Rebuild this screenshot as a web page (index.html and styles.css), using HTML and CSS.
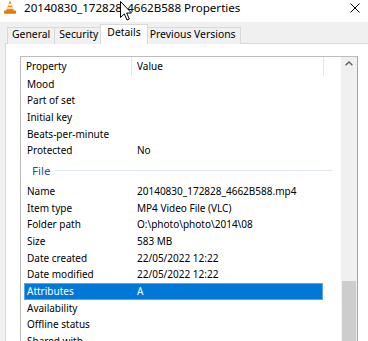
FILE: index.html
```html
<!DOCTYPE html>
<html lang="en">
<head>
    <meta charset="UTF-8">
    <meta name="viewport" content="width=device-width, initial-scale=1.0">
    <title>20140830_172828_4662B588 Properties</title>
    <link rel="stylesheet" href="styles.css">
</head>
<body>
    <div class="window">
        <!-- Title bar -->
        <header class="titlebar">
            <span class="app-icon">
                <svg width="14" height="15" viewBox="0 0 14 15">
                    <polygon points="7,0.3 2.9,11 11.1,11" fill="#f58a0b"/>
                    <polygon points="5.7,3.8 8.3,3.8 8.9,5.4 5.1,5.4" fill="#fff"/>
                    <polygon points="4.4,7.2 9.6,7.2 10.2,8.8 3.8,8.8" fill="#fff"/>
                    <rect x="1" y="10.6" width="12" height="3.2" rx="0.8" fill="#e8760a"/>
                </svg>
            </span>
            <span class="title">20140830_172828_4662B588 Properties</span>
            <span class="close">
                <svg width="10" height="10" viewBox="0 0 10 10">
                    <path d="M0.5 0.5 L9.5 9.5 M9.5 0.5 L0.5 9.5" stroke="#000" stroke-width="1"/>
                </svg>
            </span>
        </header>

        <div class="dialog">
            <!-- Tabs -->
            <nav class="tabs">
                <span class="tab">General</span>
                <span class="tab">Security</span>
                <span class="tab active">Details</span>
                <span class="tab">Previous Versions</span>
            </nav>

            <!-- Details panel -->
            <section class="panel">
                <div class="listview">
                    <div class="list">
                        <div class="list-header">
                            <span class="col-prop">Property</span>
                            <span class="col-value">Value</span>
                        </div>
                        <div class="row"><span class="cell-prop">Mood</span><span class="cell-value"></span></div>
                        <div class="row"><span class="cell-prop">Part of set</span><span class="cell-value"></span></div>
                        <div class="row"><span class="cell-prop">Initial key</span><span class="cell-value"></span></div>
                        <div class="row"><span class="cell-prop">Beats-per-minute</span><span class="cell-value"></span></div>
                        <div class="row"><span class="cell-prop">Protected</span><span class="cell-value">No</span></div>

                        <div class="group">
                            <span class="group-label">File</span>
                            <span class="group-line"></span>
                        </div>
                        <div class="row"><span class="cell-prop">Name</span><span class="cell-value">20140830_172828_4662B588.mp4</span></div>
                        <div class="row"><span class="cell-prop">Item type</span><span class="cell-value">MP4 Video File (VLC)</span></div>
                        <div class="row"><span class="cell-prop">Folder path</span><span class="cell-value">O:\photo\photo\2014\08</span></div>
                        <div class="row"><span class="cell-prop">Size</span><span class="cell-value">583 MB</span></div>
                        <div class="row"><span class="cell-prop">Date created</span><span class="cell-value">22/05/2022 12:22</span></div>
                        <div class="row"><span class="cell-prop">Date modified</span><span class="cell-value">22/05/2022 12:22</span></div>
                        <div class="row selected"><span class="cell-prop">Attributes</span><span class="cell-value">A</span></div>
                        <div class="row"><span class="cell-prop">Availability</span><span class="cell-value"></span></div>
                        <div class="row"><span class="cell-prop">Offline status</span><span class="cell-value"></span></div>
                        <div class="row"><span class="cell-prop">Shared with</span><span class="cell-value"></span></div>
                    </div>

                    <div class="scrollbar">
                        <span class="scroll-up">
                            <svg width="8" height="5" viewBox="0 0 8 5">
                                <polyline points="0.6,4.3 4,1 7.4,4.3" fill="none" stroke="#606060" stroke-width="1.4"/>
                            </svg>
                        </span>
                        <span class="scroll-thumb"></span>
                    </div>
                </div>
            </section>
        </div>

        <!-- Mouse pointer over the title -->
        <svg class="cursor" width="13" height="20" viewBox="0 0 13 20">
            <polygon points="0.5,0.5 0.5,16.5 4.3,12.9 7,19 9.3,18 6.7,12 11.5,12" fill="#fff" stroke="#000" stroke-width="1"/>
        </svg>
    </div>
</body>
</html>
```

FILE: styles.css
```css
* {
    margin: 0;
    padding: 0;
    box-sizing: border-box;
}

body {
    width: 368px;
    height: 341px;
    overflow: hidden;
    font-family: "Noto Sans", sans-serif;
    font-size: 10px;
    color: #000;
    background-color: #f0f0f0;
}

.window {
    position: relative;
    width: 378px;
    height: 341px;
    background-color: #f0f0f0;
}

/* Title bar */
.titlebar {
    display: flex;
    align-items: flex-start;
    height: 22px;
    background-color: #fff;
}

.app-icon {
    display: flex;
    width: 14px;
    height: 15px;
    margin-left: 3px;
    margin-right: 7px;
}

.title {
    font-size: 11.6px;
    line-height: 16px;
    white-space: nowrap;
}

.close {
    display: flex;
    align-items: center;
    justify-content: center;
    width: 46px;
    height: 16px;
    margin-left: auto;
}

/* Tabs */
.dialog {
    padding-left: 5px;
}

.tabs {
    display: flex;
    align-items: flex-end;
    height: 22px;
    padding-left: 2px;
}

.tab {
    height: 17px;
    padding: 0 4px;
    margin-right: -1px;
    border: 1px solid #d9d9d9;
    border-bottom: none;
    background-color: #f0f0f0;
    font-size: 10.4px;
    line-height: 13px;
    white-space: nowrap;
}

.tab.active {
    position: relative;
    z-index: 1;
    height: 20px;
    margin-left: -2px;
    margin-right: -3px;
    padding: 0 6px;
    background-color: #fff;
    line-height: 15px;
}

.panel {
    height: 320px;
    margin-top: -1px;
    padding: 12px 0 0 14px;
    background-color: #fff;
    border: 1px solid #d9d9d9;
}

/* List view */
.listview {
    display: flex;
    width: 338px;
    height: 300px;
    border: 1px solid #bcbcbc;
    border-right-color: #a6a6a6;
    background-color: #fff;
}

.list {
    flex: 1;
}

.list-header {
    display: flex;
    height: 18.67px;
    line-height: 18.67px;
}

.list-header span {
    padding-left: 5px;
    border-right: 1px solid #e5e5e5;
}

.col-prop {
    width: 111px;
}

.col-value {
    width: 192px;
}

.row {
    display: flex;
    width: 299px;
    height: 16.67px;
    margin-left: 3px;
    line-height: 16.67px;
    white-space: nowrap;
}

.cell-prop {
    width: 110px;
    padding-left: 3px;
}

.cell-value {
    flex: 1;
    padding-left: 3px;
}

.row.selected {
    background-color: #0078d7;
    box-shadow: inset 0 0 0 1px #5aa5e6;
    color: #fff;
}

.group {
    display: flex;
    align-items: center;
    height: 24px;
    padding: 0 9px 0 11px;
}

.group-label {
    font-size: 11.5px;
    line-height: 24px;
    color: #1e50a0;
}

.group-line {
    flex: 1;
    height: 1px;
    margin-left: 5px;
    background-color: #e0e6ef;
}

/* Scrollbar */
.scrollbar {
    display: flex;
    flex-direction: column;
    align-items: center;
    width: 16px;
    background-color: #f0f0f0;
}

.scroll-up {
    display: flex;
    align-items: center;
    justify-content: center;
    width: 16px;
    height: 17px;
}

.scroll-thumb {
    width: 14px;
    height: 100px;
    margin-top: 211px;
    background-color: #cdcdcd;
}

.cursor {
    position: absolute;
    left: 120px;
    top: 1px;
}
```
